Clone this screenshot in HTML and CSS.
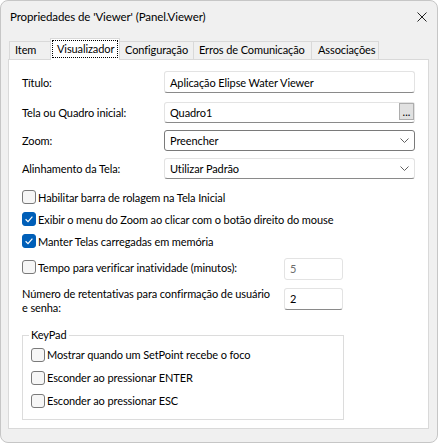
FILE: index.html
```html
<!DOCTYPE html>
<html lang="pt">
<head>
<meta charset="UTF-8">
<link rel="stylesheet" href="styles.css">
</head>
<body>

<div class="window">
    <div class="titlebar">
        <span class="title">Propriedades de 'Viewer' (Panel.Viewer)</span>
        <svg class="close" width="10" height="10" viewBox="0 0 10 10">
            <path d="M0.5 0.5 L9.5 9.5 M9.5 0.5 L0.5 9.5" stroke="#222" stroke-width="1" fill="none"/>
        </svg>
    </div>

    <div class="tabs">
        <div class="tab t-item">Item</div>
        <div class="tab t-view active"><span class="focus">Visualizador</span></div>
        <div class="tab t-conf">Configuração</div>
        <div class="tab t-err">Erros de Comunicação</div>
        <div class="tab t-assoc">Associações</div>
    </div>

    <div class="page">
        <div class="form-row first">
            <span class="label">Título:</span>
            <div class="field textbox">Aplicação Elipse Water Viewer</div>
        </div>
        <div class="form-row">
            <span class="label">Tela ou Quadro inicial:</span>
            <div class="field textbox browse">
                <span>Quadro1</span>
                <button class="dots">...</button>
            </div>
        </div>
        <div class="form-row">
            <span class="label">Zoom:</span>
            <div class="field select open">
                <span>Preencher</span>
                <svg width="9" height="5" viewBox="0 0 9 5"><polyline points="0.5,0.5 4.5,4.5 8.5,0.5" stroke="#606060" fill="none"/></svg>
            </div>
        </div>
        <div class="form-row">
            <span class="label">Alinhamento da Tela:</span>
            <div class="field select">
                <span>Utilizar Padrão</span>
                <svg width="9" height="5" viewBox="0 0 9 5"><polyline points="0.5,0.5 4.5,4.5 8.5,0.5" stroke="#606060" fill="none"/></svg>
            </div>
        </div>

        <div class="checks">
            <div class="check"><span class="cb"></span>Habilitar barra de rolagem na Tela Inicial</div>
            <div class="check"><span class="cb on"><svg width="14" height="14" viewBox="0 0 14 14"><path d="M3.6 7.3 L6 9.6 L10.4 4.6" stroke="#fff" stroke-width="1.2" fill="none"/></svg></span>Exibir o menu do Zoom ao clicar com o botão direito do mouse</div>
            <div class="check"><span class="cb on"><svg width="14" height="14" viewBox="0 0 14 14"><path d="M3.6 7.3 L6 9.6 L10.4 4.6" stroke="#fff" stroke-width="1.2" fill="none"/></svg></span>Manter Telas carregadas em memória</div>
        </div>

        <div class="num-row idle">
            <div class="check num-label"><span class="cb"></span>Tempo para verificar inatividade (minutos):</div>
            <div class="numbox disabled">5</div>
        </div>
        <div class="num-row retry">
            <span class="num-label wrap">Número de retentativas para confirmação de usuário<br>e senha:</span>
            <div class="numbox">2</div>
        </div>

        <fieldset class="group">
            <legend>KeyPad</legend>
            <div class="check tall"><span class="cb"></span>Mostrar quando um SetPoint recebe o foco</div>
            <div class="check tall"><span class="cb"></span>Esconder ao pressionar ENTER</div>
            <div class="check tall"><span class="cb"></span>Esconder ao pressionar ESC</div>
        </fieldset>
    </div>
</div>

</body>
</html>
```

FILE: styles.css
```css
* { margin: 0; padding: 0; box-sizing: border-box; }
body {
    background: #fff;
    font-family: Lato, "Noto Sans", sans-serif;
    font-size: 11px;
    letter-spacing: -0.1px;
    color: #000;
    overflow: hidden;
}

.window {
    width: 438px;
    height: 443px;
    background: #f0f0f0;
    border: 1px solid #c6c6c6;
    border-radius: 8px;
    display: flex;
    flex-direction: column;
}

.titlebar {
    height: 31px;
    display: flex;
    align-items: center;
    justify-content: space-between;
    padding: 0 10px 0 9px;
    font-size: 11.5px;
}

/* tab strip */
.tabs {
    height: 27px;
    display: flex;
    align-items: flex-end;
    padding-left: 8px;
}

.tab {
    height: 18px;
    line-height: 16px;
    padding: 0 0 0 5px;
    border: 1px solid #d9d9d9;
    border-bottom: none;
    margin-right: -1px;
    white-space: nowrap;
}
.t-item { width: 42px; }
.t-view { width: 70px; }
.t-conf { width: 75px; }
.t-err { width: 119px; }
.t-assoc { width: 68px; padding-left: 6px; }

.tab.active {
    height: 22px;
    margin-bottom: -1px;
    padding: 1px 1px 0;
    background: #fff;
    position: relative;
    z-index: 1;
}

.focus {
    display: block;
    height: 18px;
    line-height: 15px;
    padding: 0 4px;
    border: 1px dotted #000;
}

.page {
    flex: 1;
    margin: 0 8px 13px 7px;
    background: #fff;
    border: 1px solid #d9d9d9;
    padding: 11px 13px 0 13px;
}

/* label + field rows */
.form-row {
    display: flex;
    align-items: center;
    height: 21px;
    margin-bottom: 7px;
}
.form-row.first { height: 22px; margin-bottom: 9px; }

.label { width: 142px; flex-shrink: 0; }

.field {
    flex: 1;
    height: 100%;
    border: 1px solid #e3e3e3;
    border-bottom-color: #8a8a8a;
    border-radius: 3px;
    background: #fff;
    display: flex;
    align-items: center;
    padding: 0 5px;
    white-space: nowrap;
}

.browse {
    justify-content: space-between;
    align-items: flex-start;
    padding-right: 0;
}
.browse span { line-height: 19px; }

.dots {
    width: 15px;
    height: 17px;
    background: #e1e1e1;
    border: 1px solid #adadad;
    font-family: inherit;
    font-size: 11px;
    line-height: 15px;
    color: #000;
}

.select { justify-content: space-between; }
.select.open { border-color: #7a7a7a; }

/* checkboxes */
.checks { margin-top: 3px; }

.check {
    display: flex;
    align-items: center;
    height: 22px;
    white-space: nowrap;
}
.check.tall { height: 23px; }

.cb {
    width: 14px;
    height: 14px;
    margin-right: 2px;
    border: 1px solid #7a7a7a;
    border-radius: 3px;
    background: #f6f6f6;
    flex-shrink: 0;
}
.cb.on {
    border-color: #005fb8;
    background: #005fb8;
}
.cb svg { display: block; margin: -1px; }

/* numeric fields */
.num-row {
    display: flex;
    align-items: flex-start;
    height: 22px;
}
.num-row.idle { margin-top: 6px; }
.num-row.idle .check { height: 18px; }
.num-row.retry { margin-top: 8px; }

.num-label { width: 262px; flex-shrink: 0; }
.wrap {
    line-height: 14px;
    margin-top: -1px;
    white-space: nowrap;
}

.numbox {
    width: 59px;
    height: 22px;
    flex-shrink: 0;
    border: 1px solid #e3e3e3;
    border-bottom-color: #8a8a8a;
    border-radius: 3px;
    padding-left: 5px;
    line-height: 20px;
}
.numbox.disabled {
    border-bottom-color: #e3e3e3;
    color: #6d6d6d;
}

/* KeyPad group */
.group {
    width: 322px;
    margin-top: 18px;
    border: 1px solid #dcdcdc;
    padding: 1px 8px 7px;
}

.group legend {
    line-height: 14px;
    padding: 0 2px;
    margin-left: -2px;
}
```
